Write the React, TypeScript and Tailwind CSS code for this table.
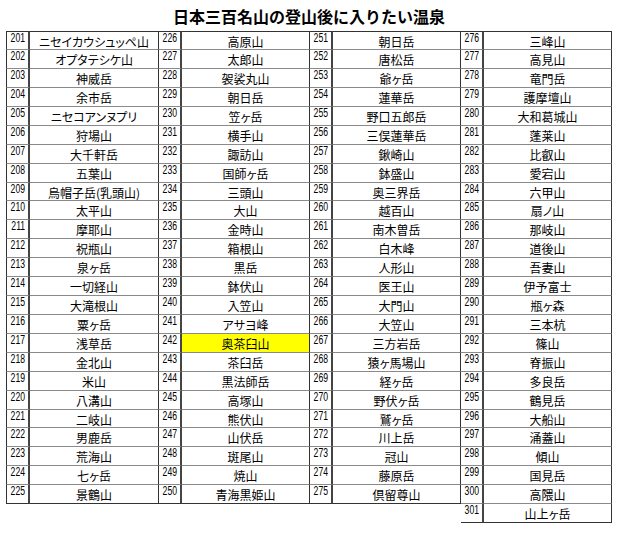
import React from "react";

const groups: { start: number; names: string[] }[] = [
  {
    start: 201,
    names: [
      "ニセイカウシュッペ山",
      "オプタテシケ山",
      "神威岳",
      "余市岳",
      "ニセコアンヌプリ",
      "狩場山",
      "大千軒岳",
      "五葉山",
      "烏帽子岳(乳頭山)",
      "太平山",
      "摩耶山",
      "祝瓶山",
      "泉ヶ岳",
      "一切経山",
      "大滝根山",
      "粟ヶ岳",
      "浅草岳",
      "金北山",
      "米山",
      "八溝山",
      "二岐山",
      "男鹿岳",
      "荒海山",
      "七ヶ岳",
      "景鶴山",
    ],
  },
  {
    start: 226,
    names: [
      "高原山",
      "太郎山",
      "袈裟丸山",
      "朝日岳",
      "笠ヶ岳",
      "横手山",
      "諏訪山",
      "国師ヶ岳",
      "三頭山",
      "大山",
      "金時山",
      "箱根山",
      "黒岳",
      "鉢伏山",
      "入笠山",
      "アサヨ峰",
      "奥茶臼山",
      "茶臼岳",
      "黒法師岳",
      "高塚山",
      "熊伏山",
      "山伏岳",
      "斑尾山",
      "焼山",
      "青海黒姫山",
    ],
  },
  {
    start: 251,
    names: [
      "朝日岳",
      "唐松岳",
      "爺ヶ岳",
      "蓮華岳",
      "野口五郎岳",
      "三俣蓮華岳",
      "鍬崎山",
      "鉢盛山",
      "奥三界岳",
      "越百山",
      "南木曽岳",
      "白木峰",
      "人形山",
      "医王山",
      "大門山",
      "大笠山",
      "三方岩岳",
      "猿ヶ馬場山",
      "経ヶ岳",
      "野伏ヶ岳",
      "鷲ヶ岳",
      "川上岳",
      "冠山",
      "藤原岳",
      "倶留尊山",
    ],
  },
  {
    start: 276,
    names: [
      "三峰山",
      "高見山",
      "竜門岳",
      "護摩壇山",
      "大和葛城山",
      "蓬莱山",
      "比叡山",
      "愛宕山",
      "六甲山",
      "扇ノ山",
      "那岐山",
      "道後山",
      "吾妻山",
      "伊予富士",
      "瓶ヶ森",
      "三本杭",
      "篠山",
      "脊振山",
      "多良岳",
      "鶴見岳",
      "大船山",
      "涌蓋山",
      "傾山",
      "国見岳",
      "高隈山",
      "山上ヶ岳",
    ],
  },
];

const jp = "font-['Noto_Sans_CJK_JP','Noto_Sans',sans-serif]";

export default function App() {
  const cells: React.ReactNode[] = [];
  for (let r = 0; r < 26; r++) {
    for (let g = 0; g < 4; g++) {
      const grp = groups[g];
      const name = grp.names[r];
      if (name === undefined) {
        cells.push(<div key={`e${r}-${g}-a`} />);
        cells.push(<div key={`e${r}-${g}-b`} />);
        continue;
      }
      const last = r === grp.names.length - 1;
      const top = r === 0;
      const num = grp.start + r;
      const highlight = num === 242;
      const bottomCls = last ? "border-b-[#333]" : "border-b-[#8a8a8a]";
      cells.push(
        <div
          key={`n${num}`}
          className={`flex items-start justify-end border-b border-r-2 border-r-[#444] pr-[3px] pt-[1px] ${bottomCls} ${
            top ? "border-t border-t-[#333]" : ""
          } ${g === 0 ? "border-l border-l-[#333]" : ""}`}
        >
          <span className="origin-right scale-x-[0.72] font-['Liberation_Sans',Arial,sans-serif] text-[12px] leading-[10px] text-black">
            {num}
          </span>
        </div>
      );
      cells.push(
        <div
          key={`m${num}`}
          className={`flex items-center justify-center border-b border-r border-r-[#333] pt-[2px] ${bottomCls} ${
            top ? "border-t border-t-[#333]" : ""
          } ${highlight ? "bg-[#ffff00]" : ""}`}
        >
          <span
            className={`${jp} whitespace-nowrap text-[12px] leading-none text-black [font-feature-settings:'palt']`}
          >
            {name}
          </span>
        </div>
      );
    }
  }

  return (
    <div className="h-[534px] w-[624px] overflow-hidden bg-white pl-[6px]">
      <div className="flex h-[31px] w-[606px] items-center justify-center">
        <h1 className={`${jp} text-[16px] font-bold leading-none text-black`}>
          日本三百名山の登山後に入りたい温泉
        </h1>
      </div>
      <div className="grid w-[606px] grid-cols-[24px_129px_23px_128px_23px_128px_23px_128px] grid-rows-[repeat(8,19px)_18px_repeat(11,19px)_18px_repeat(5,19px)]">
        {cells}
      </div>
    </div>
  );
}
